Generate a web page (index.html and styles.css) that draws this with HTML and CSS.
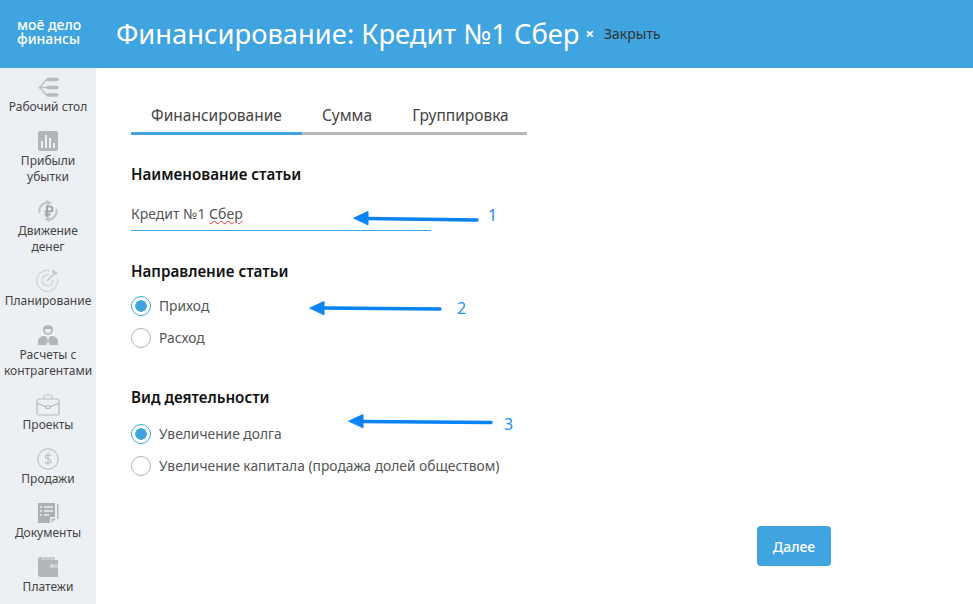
FILE: index.html
```html
<!DOCTYPE html>
<html lang="ru">
<head>
<meta charset="utf-8">
<title>Финансирование</title>
<link rel="stylesheet" href="styles.css">
</head>
<body>
<header class="topbar">
  <div class="logo">мое̄ дело<br>финансы</div>
  <h1 class="title">Финансирование: Кредит №1 Сбер</h1>
  <span class="close-x">×</span>
  <span class="close-text">Закрыть</span>
</header>
<div class="body">
  <nav class="sidebar">
    <a class="nav-item">
      <svg class="nav-icon" viewBox="0 0 22 22"><path d="M1.500 11.500C6 11.500 6 3.500 11 3.500M1.500 11.500C6 11.500 6 19 11 19M1.500 11.500H10" fill="none" stroke="#bfc2c5" stroke-width="1.600"/><path d="M11 3.500h9M11 11.500h9M11 19h9" fill="none" stroke="#b7babd" stroke-width="3.400" stroke-linecap="round"/></svg>
      <span>Рабочий стол</span>
    </a>
    <a class="nav-item">
      <svg class="nav-icon" viewBox="0 0 22 22"><rect x="1" y="1" width="20" height="20" rx="2" fill="#b3b6b9"/><path d="M5 18v-7M9 18V5M13 18V8M17 18v-5" stroke="#eceff3" stroke-width="2"/></svg>
      <span>Прибыли<br>убытки</span>
    </a>
    <a class="nav-item">
      <svg class="nav-icon" viewBox="0 0 22 22"><path d="M2.500 13C1.500 7 6 2 12 2.500" fill="none" stroke="#c3c6c9" stroke-width="2.200"/><path d="M9 0l6 2.500-5 3.500z" fill="#c3c6c9"/><path d="M19.500 9c1 6-3.500 11-9.500 10.500" fill="none" stroke="#c3c6c9" stroke-width="2.200"/><path d="M13 22l-6-2.500 5-3.500z" fill="#c3c6c9"/><path d="M10 17V6.500h3a2.500 2.500 0 0 1 0 5H7.500M7.500 14.500H13.500" fill="none" stroke="#a4a7aa" stroke-width="2.200"/></svg>
      <span>Движение<br>денег</span>
    </a>
    <a class="nav-item">
      <svg class="nav-icon nav-icon-tall" viewBox="0 0 24 24"><path d="M13 2.500A10.500 10.500 0 1 0 21.500 11" fill="none" stroke="#d3d6d9" stroke-width="1.300"/><path d="M12.500 7A5.500 5.500 0 1 0 17 11.500" fill="none" stroke="#d3d6d9" stroke-width="1.300"/><path d="M11 13l9-9" stroke="#c6c9cc" stroke-width="1.500"/><path d="M18 1l1 3 3 1-2 2-3-1-1-3z" fill="#c6c9cc"/></svg>
      <span>Планирование</span>
    </a>
    <a class="nav-item">
      <svg class="nav-icon" viewBox="0 0 22 22"><circle cx="11" cy="6" r="4" fill="none" stroke="#b7babd" stroke-width="2"/><path d="M6.500 2.500h9V5h-9z" fill="#aeb1b4"/><path d="M1 21v-4c0-3 3-5 7-5l3 2 3-2c4 0 7 2 7 5v4z" fill="#b3b6b9"/><path d="M10 14h2l.5 7h-3z" fill="#eceff3"/><path d="M10.400 15h1.200l.3 4h-1.800z" fill="#b3b6b9"/></svg>
      <span>Расчеты с<br>контрагентами</span>
    </a>
    <a class="nav-item">
      <svg class="nav-icon nav-icon-wide" viewBox="0 0 24 22"><path d="M8 5V2.500A1.500 1.500 0 0 1 9.500 1h5A1.500 1.500 0 0 1 16 2.500V5" fill="none" stroke="#c3c6c9" stroke-width="1.200"/><rect x="1" y="5" width="22" height="16" rx="2" fill="none" stroke="#b7babd" stroke-width="1.200"/><path d="M1 9l9 4M23 9l-9 4" stroke="#b7babd" stroke-width="1.200"/><rect x="10" y="11.500" width="4" height="3" rx="1" fill="none" stroke="#b7babd" stroke-width="1.200"/></svg>
      <span>Проекты</span>
    </a>
    <a class="nav-item">
      <svg class="nav-icon nav-icon-wide" viewBox="0 0 24 24"><circle cx="12" cy="12" r="11" fill="none" stroke="#c3c6c9" stroke-width="1.300"/><path d="M15.500 8.500c-1-1.500-6.500-2-6.500 1 0 3 6.500 2 6.500 5 0 3-5.500 2.500-7 .8M12 5v14" fill="none" stroke="#b7babd" stroke-width="1.200"/></svg>
      <span>Продажи</span>
    </a>
    <a class="nav-item">
      <svg class="nav-icon" viewBox="0 0 22 22"><path d="M1 1h17v14h-5v6H1z" fill="#adb0b3"/><path d="M20 2h1.500v15H20z" fill="#b7babd"/><path d="M14.500 21v-4.500H19z" fill="#b7babd"/><path d="M3 5h2M7 5h9M3 9h2M7 9h9M3 13h2M7 13h5" stroke="#eceff3" stroke-width="1.500"/></svg>
      <span>Документы</span>
    </a>
    <a class="nav-item">
      <svg class="nav-icon" viewBox="0 0 22 22"><path d="M3 1h15v3H3z" fill="#c9ccce"/><path d="M1 4a3 3 0 0 1 3-3v3h17v17H4a3 3 0 0 1-3-3z" fill="#b3b6b9"/><rect x="13" y="8" width="8" height="4" fill="#c9ccce"/><circle cx="15" cy="10" r="1" fill="#eceff3"/></svg>
      <span>Платежи</span>
    </a>
  </nav>
  <main class="content">
    <div class="tabs">
      <div class="tab tab-active">Финансирование</div>
      <div class="tab">Сумма</div>
      <div class="tab">Группировка</div>
    </div>
    <section class="field">
      <h2 class="field-title">Наименование статьи</h2>
      <div class="text-input">Кредит №1 <span class="misspelled">Сбер</span></div>
    </section>
    <section class="field field-radios">
      <h2 class="field-title">Направление статьи</h2>
      <div class="radios">
        <label class="radio radio-on"><i class="dot"></i>Приход</label>
        <label class="radio"><i class="dot"></i>Расход</label>
      </div>
    </section>
    <section class="field field-radios-last">
      <h2 class="field-title">Вид деятельности</h2>
      <div class="radios radios-last">
        <label class="radio radio-on"><i class="dot"></i>Увеличение долга</label>
        <label class="radio"><i class="dot"></i>Увеличение капитала (продажа долей обществом)</label>
      </div>
    </section>
    <div class="actions"><button class="next">Далее</button></div>
    <svg class="arrows" viewBox="0 0 877 536" width="877" height="536">
      <g fill="#0a84f5" stroke="#0a84f5" stroke-linecap="round">
        <path d="M270 150.500L381 152" stroke-width="3.500"/><path d="M258 150l14-6.500v13z" stroke-width="1"/>
        <path d="M226 240L344 241" stroke-width="3.500"/><path d="M214 240l14-6.500v13z" stroke-width="1"/>
        <path d="M265 353.500L395 354.500" stroke-width="3.500"/><path d="M253 353l14-6.500v13z" stroke-width="1"/>
      </g>
    </svg>
    <span class="mark mark-1">1</span>
    <span class="mark mark-2">2</span>
    <span class="mark mark-3">3</span>
  </main>
</div>
</body>
</html>
```
FILE: styles.css
```css
* { box-sizing: border-box; }
html, body { margin: 0; height: 100%; overflow: hidden; }
body { font-family: "Noto Sans", "Liberation Sans", sans-serif; color: #333; background: #fff; display: flex; flex-direction: column; }

.topbar { height: 68px; background: #3fa4e0; display: flex; align-items: center; color: #fff; flex: none; padding-bottom: 2px; }
.logo { width: 116px; padding-left: 17px; padding-bottom: 3px; font-size: 14px; line-height: 13.500px; font-weight: 500; }
.title { margin: 0; font-size: 27.350px; font-weight: 400; }
.close-x { margin-left: 6px; font-size: 15px; font-weight: 700; }
.close-text { margin-left: 10px; font-size: 14px; color: #333; }

.body { flex: 1; display: flex; min-height: 0; }
.sidebar { width: 96px; flex: none; background: #eceff3; padding-top: 8px; display: flex; flex-direction: column; overflow: hidden; }
.nav-item { display: flex; flex-direction: column; align-items: center; text-align: center; font-size: 12px; line-height: 16px; color: #444; margin-bottom: 16px; }
.nav-item span { margin-top: 1px; margin-bottom: -1px; }
.nav-icon { width: 22px; height: 22px; display: block; }
.nav-icon-tall { width: 24px; height: 24px; margin-top: -2px; }
.nav-icon-wide { width: 24px; height: 22px; }

.content { position: relative; flex: 1; padding: 32px 0 0 35px; }
.tabs { display: flex; width: 396px; height: 35px; border-bottom: 3px solid #b9b9bd; }
.tab { height: 35px; padding: 0 20px; font-size: 15.500px; line-height: 30px; color: #444; }
.tab-active { border-bottom: 3px solid #3fa4e0; }

.field { width: 700px; }
.field:first-of-type { margin-top: 29px; }
.field-title { margin: 0; font-size: 15.200px; line-height: 20px; font-weight: 600; color: #111; }
.text-input { width: 300px; margin-top: 18px; height: 29px; padding-top: 2px; border-bottom: 1px solid #3fa4e0; font-size: 14px; line-height: 20px; color: #555; }
.misspelled { text-decoration: underline wavy #e33; text-decoration-thickness: 1px; }

.field-radios { margin-top: 30px; }
.field-radios-last { margin-top: 40px; }
.radios { display: flex; flex-direction: column; gap: 12px; margin-top: 14px; }
.radios-last { margin-top: 16px; }
.radio { display: flex; align-items: center; gap: 8px; height: 20px; font-size: 13.800px; color: #555; }
.dot { width: 20px; height: 20px; margin-bottom: -2px; border-radius: 50%; border: 1px solid #b5b5b5; background: #fff; flex: none; }
.radio-on .dot { border-color: #3fa4e0; background: radial-gradient(circle, #3fa4e0 0 5.500px, #fff 6px); }

.actions { width: 700px; margin-top: 51px; display: flex; justify-content: flex-end; }
.next { width: 74px; height: 40px; border: 0; border-radius: 4px; background: #3fa4e0; color: #fff; font: 500 14px "Noto Sans", sans-serif; }

.arrows { position: absolute; left: 0; top: 0; pointer-events: none; }
.mark { position: absolute; font-size: 16px; line-height: 20px; color: #2090ee; }
.mark-1 { left: 392px; top: 137px; }
.mark-2 { left: 361px; top: 230px; }
.mark-3 { left: 408px; top: 346px; }
```
